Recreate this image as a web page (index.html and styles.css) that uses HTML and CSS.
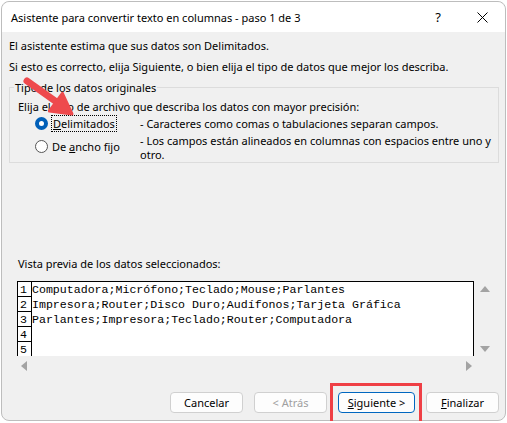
FILE: index.html
```html
<!DOCTYPE html>
<html lang="es">
<head>
    <meta charset="UTF-8">
    <title>Asistente para convertir texto en columnas</title>
    <link rel="stylesheet" href="styles.css">
</head>
<body>
    <div class="window">
        <div class="titlebar">
            <span class="title">Asistente para convertir texto en columnas - paso 1 de 3</span>
            <span class="help">?</span>
            <span class="close">
                <svg width="11" height="11" viewBox="0 0 11 11"><path d="M0.5 0.5L10.5 10.5M10.5 0.5L0.5 10.5" stroke="#000" stroke-width="1"/></svg>
            </span>
        </div>

        <div class="content">
            <p class="line">El asistente estima que sus datos son Delimitados.</p>
            <p class="line">Si esto es correcto, elija Siguiente, o bien elija el tipo de datos que mejor los describa.</p>

            <fieldset class="group">
                <legend>Tipo de los datos originales</legend>
                <p class="hint">Elija el tipo de archivo que describa los datos con mayor precisión:</p>
                <div class="option">
                    <span class="radio checked"></span>
                    <span class="opt-label"><span class="focus"><u>D</u>elimitados</span></span>
                    <span class="opt-desc">- Caracteres como comas o tabulaciones separan campos.</span>
                </div>
                <div class="option second">
                    <span class="radio"></span>
                    <span class="opt-label">De <u>a</u>ncho fijo</span>
                    <span class="opt-desc">- Los campos están alineados en columnas con espacios entre uno y<br>otro.</span>
                </div>
            </fieldset>

            <p class="preview-label">Vista previa de los datos seleccionados:</p>
            <div class="preview-wrap">
                <div class="preview">
                    <div class="row"><span class="num">1</span><span class="data">Computadora;Micrófono;Teclado;Mouse;Parlantes</span></div>
                    <div class="row"><span class="num">2</span><span class="data">Impresora;Router;Disco Duro;Audífonos;Tarjeta Gráfica</span></div>
                    <div class="row"><span class="num">3</span><span class="data">Parlantes;Impresora;Teclado;Router;Computadora</span></div>
                    <div class="row"><span class="num">4</span><span class="data"></span></div>
                    <div class="row"><span class="num">5</span><span class="data"></span></div>
                    <div class="row"><span class="num"></span><span class="data"></span></div>
                </div>
                <div class="vscroll">
                    <span class="tri up"></span>
                    <span class="tri down"></span>
                </div>
            </div>
            <div class="hscroll">
                <span class="tri left"></span>
                <span class="tri right"></span>
            </div>

            <div class="buttons">
                <button class="btn">Cancelar</button>
                <button class="btn disabled">&lt; Atrás</button>
                <span class="highlight"><button class="btn default"><u>S</u>iguiente &gt;</button></span>
                <button class="btn"><u>F</u>inalizar</button>
            </div>
        </div>

        <!-- red annotation arrow -->
        <svg class="arrow" width="60" height="45" viewBox="0 0 60 45">
            <path d="M5 5L36 27" stroke="#ee4a4d" stroke-width="7" stroke-linecap="round"/>
            <path d="M27.4 35.1L40.4 17.3L50 38Z" fill="#ee4a4d" stroke="#ee4a4d" stroke-width="3" stroke-linejoin="round"/>
        </svg>
    </div>
</body>
</html>
```

FILE: styles.css
```css
body {
    margin: 0;
    background: #fff;
    font-family: "Segoe UI", "Noto Sans", Arial, sans-serif;
    font-size: 11px;
    color: #000;
}

.window {
    position: relative;
    width: 503px;
    height: 418px;
    margin: 1px 0 0 1px;
    border: 1px solid #bdbdbd;
    border-radius: 8px;
    background: #f0f0f0;
    display: flex;
    flex-direction: column;
}

.titlebar {
    height: 30px;
    background: #fff;
    border-radius: 8px 8px 0 0;
    display: flex;
    align-items: center;
    padding-left: 9px;
    flex-shrink: 0;
}

.title {
    font-size: 11px;
}

.help {
    margin-left: auto;
    width: 14px;
    text-align: center;
    font-size: 13px;
}

.close {
    width: 11px;
    height: 11px;
    margin: 0 17px 0 32px;
    display: flex;
}

.content {
    padding: 0 6px 0 7px;
    display: flex;
    flex-direction: column;
}

.line {
    margin: 6px 0 0 0;
    line-height: 15px;
}

.line + .line {
    margin-top: 6px;
}

.group {
    margin: 6px 0 0 0;
    padding: 0 8px 0 8px;
    border: 1px solid #dcdcdc;
    min-width: 0;
}

.group legend {
    padding: 0 1px;
    margin-left: -4px;
    line-height: 15px;
}

.hint {
    margin: 4px 0 0 0;
    line-height: 15px;
}

.option {
    display: flex;
    align-items: flex-start;
    line-height: 15px;
    margin-top: 2px;
}

.option.second {
    margin-top: 8px;
}

.option.second .opt-desc {
    margin-top: -5px;
    line-height: 14px;
    white-space: nowrap;
}

.radio {
    width: 11px;
    height: 11px;
    margin: 1px 4px 0 17px;
    border: 1px solid #555;
    border-radius: 50%;
    background: #fff;
    flex-shrink: 0;
}

.radio.checked {
    width: 5px;
    height: 5px;
    border: 4px solid #005fb8;
}

.opt-label {
    width: 88px;
    flex-shrink: 0;
}

.focus {
    outline: 1px dotted #000;
    padding: 0 1px;
}

.opt-desc {
    flex: 1;
}

.preview-label {
    margin: 93px 0 0 9px;
    line-height: 15px;
}

.preview-wrap {
    display: flex;
    margin: 10px 0 0 8px;
}

.preview {
    width: 455px;
    height: 74px;
    border: 1px solid #000;
    border-bottom: none;
    background: #fff;
    overflow: hidden;
    font-family: "Courier New", "Liberation Mono", monospace;
    font-size: 11.6px;
}

.row {
    display: flex;
    height: 15px;
    line-height: 15px;
}

.num {
    width: 14px;
    flex-shrink: 0;
    border-right: 1px solid #000;
    border-bottom: 1px solid #000;
    box-sizing: border-box;
    padding-left: 2px;
}

.data {
    white-space: pre;
}

.vscroll {
    width: 20px;
    display: flex;
    flex-direction: column;
    justify-content: space-between;
    align-items: center;
    padding: 5px 0 4px 0;
    margin-left: 1px;
}

.hscroll {
    display: flex;
    justify-content: space-between;
    width: 451px;
    margin: 4px 0 0 12px;
    height: 12px;
    align-items: center;
}

.tri {
    width: 0;
    height: 0;
    border: 5px solid transparent;
}

.tri.up {
    border-bottom: 6px solid #a3a3a3;
    border-top: none;
}

.tri.down {
    border-top: 6px solid #a3a3a3;
    border-bottom: none;
}

.tri.left {
    border-right: 6px solid #a3a3a3;
    border-left: none;
}

.tri.right {
    border-left: 6px solid #a3a3a3;
    border-right: none;
}

.buttons {
    display: flex;
    justify-content: flex-end;
    align-items: center;
    gap: 11px;
    margin-top: 20px;
}

.btn {
    width: 73px;
    height: 21px;
    padding: 0;
    font-family: inherit;
    font-size: 11px;
    color: #000;
    background: #fdfdfd;
    border: 1px solid #d0d0d0;
    border-radius: 4px;
}

.btn.disabled {
    color: #a0a0a0;
}

.btn.default {
    width: 77px;
    border-color: #0067c0;
}

.highlight {
    position: relative;
    display: flex;
}

/* red annotation box drawn over the screenshot */
.highlight::after {
    content: "";
    position: absolute;
    left: -8px;
    right: -7px;
    top: -9px;
    bottom: -14px;
    border: 3px solid #ef3f45;
}

.arrow {
    position: absolute;
    left: 20px;
    top: 74px;
}
```
